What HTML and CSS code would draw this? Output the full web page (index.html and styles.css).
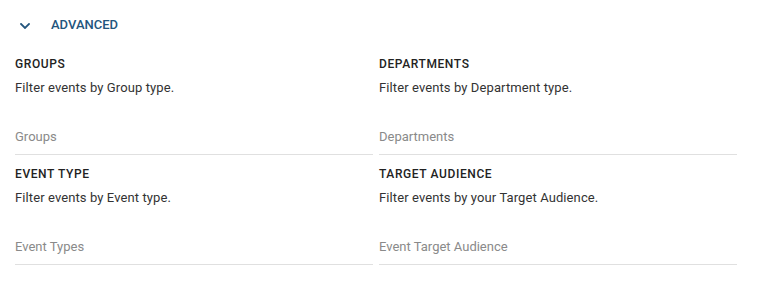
FILE: index.html
```html
<!DOCTYPE html>
<html lang="en">
<head>
    <meta charset="UTF-8">
    <meta name="viewport" content="width=device-width, initial-scale=1.0">
    <title>Advanced filters</title>
    <link rel="stylesheet" href="styles.css">
</head>
<body>
    <div class="panel">
        <div class="panel-header">
            <svg class="chevron" width="10" height="6" viewBox="0 0 10 6">
                <polyline points="1,1 5,5 9,1" fill="none" stroke="currentColor" stroke-width="1.8" stroke-linecap="square"/>
            </svg>
            <span class="panel-title">ADVANCED</span>
        </div>

        <div class="filters">
            <div class="filter">
                <div class="filter-label">GROUPS</div>
                <div class="filter-desc">Filter events by Group type.</div>
                <div class="filter-select"><span class="placeholder">Groups</span></div>
            </div>

            <div class="filter">
                <div class="filter-label">DEPARTMENTS</div>
                <div class="filter-desc">Filter events by Department type.</div>
                <div class="filter-select"><span class="placeholder">Departments</span></div>
            </div>

            <div class="filter">
                <div class="filter-label">EVENT TYPE</div>
                <div class="filter-desc">Filter events by Event type.</div>
                <div class="filter-select"><span class="placeholder">Event Types</span></div>
            </div>

            <div class="filter">
                <div class="filter-label">TARGET AUDIENCE</div>
                <div class="filter-desc">Filter events by your Target Audience.</div>
                <div class="filter-select"><span class="placeholder">Event Target Audience</span></div>
            </div>
        </div>
    </div>
</body>
</html>
```

FILE: styles.css
```css
body {
    margin: 0;
    font-family: Roboto, "Liberation Sans", Arial, sans-serif;
    background-color: #fff;
}

.panel {
    padding: 15px 26px 0 15px;
}

.panel-header {
    display: flex;
    align-items: center;
    height: 20px;
    color: #23557d;
}

.chevron {
    margin-left: 5px;
    margin-top: 1px;
}

.panel-title {
    margin-left: 21px;
    font-size: 13px;
    font-weight: 500;
    line-height: 20px;
}

.filters {
    display: grid;
    grid-template-columns: 1fr 1fr;
    column-gap: 6px;
    row-gap: 11px;
    margin-top: 21px;
}

.filter-label {
    font-size: 12px;
    font-weight: 500;
    line-height: 16px;
    letter-spacing: 0.6px;
    color: #222;
}

.filter-desc {
    margin-top: 6px;
    font-size: 13px;
    line-height: 20px;
    letter-spacing: 0.1px;
    color: #333;
}

.filter-select {
    margin-top: 29px;
    padding-bottom: 7px;
    border-bottom: 1px solid #e0e0e0;
    font-size: 13px;
    line-height: 20px;
}

.placeholder {
    color: #8a8a8a;
}
```
